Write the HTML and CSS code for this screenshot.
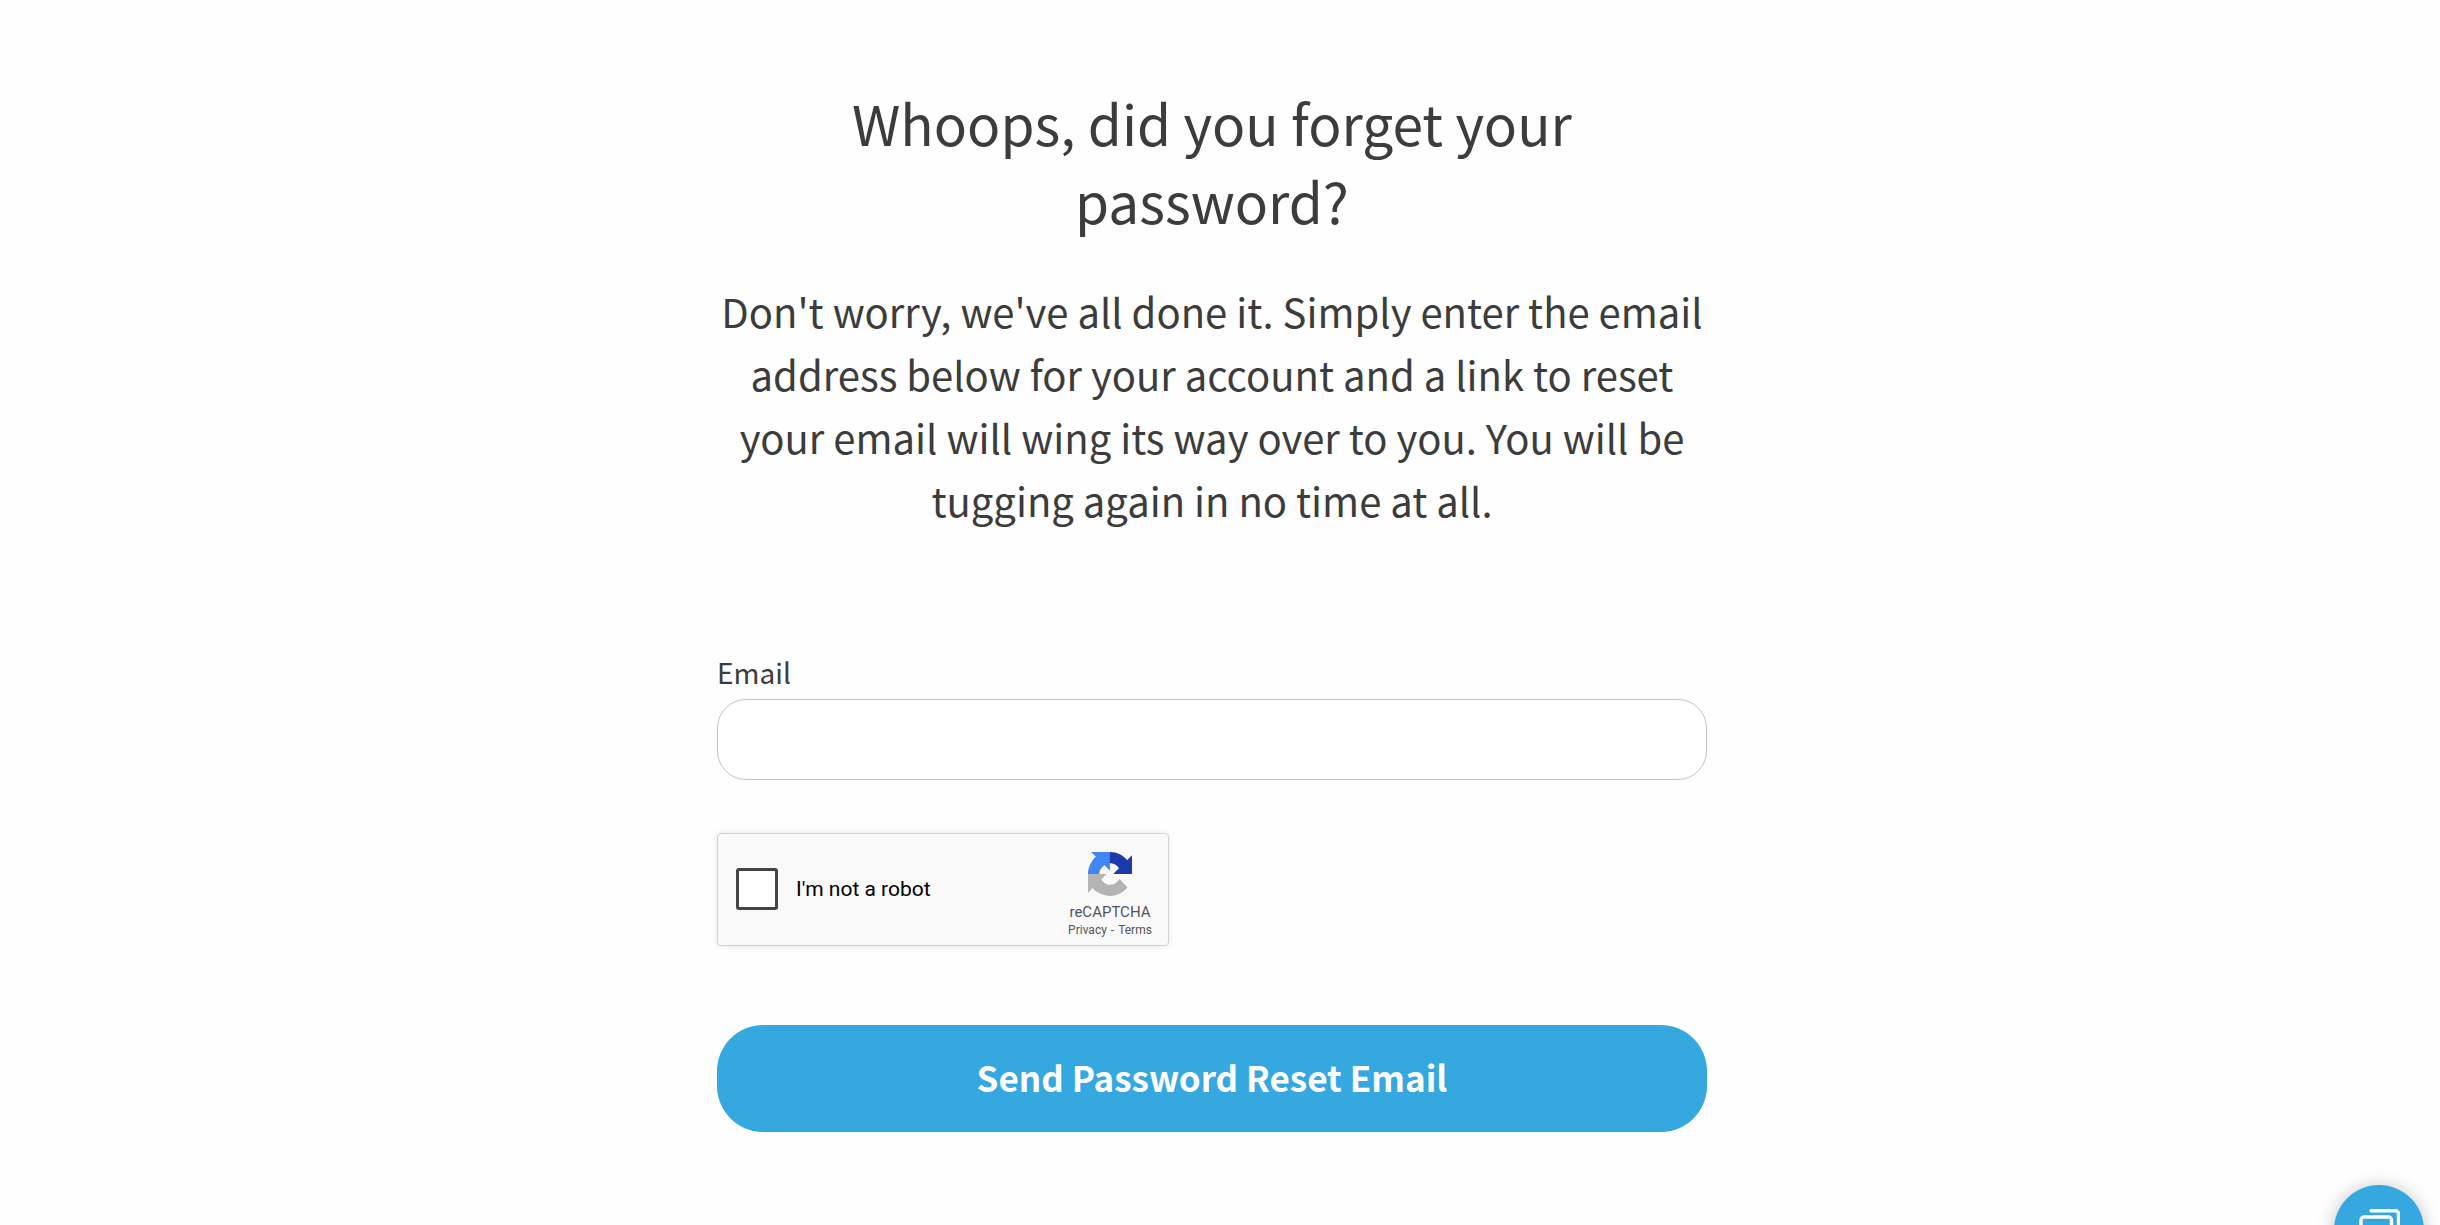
FILE: index.html
```html
<!DOCTYPE html>
<html lang="en">
<head>
<meta charset="utf-8">
<meta name="viewport" content="width=device-width, initial-scale=1">
<title>Forgot password</title>
<link rel="stylesheet" href="styles.css">
</head>
<body>
<main class="reset">
  <h1 class="reset-title">Whoops, did you forget your password?</h1>
  <p class="reset-intro">Don't worry, we've all done it. Simply enter the email address below for your account and a link to reset your email will wing its way over to you. You will be tugging again in no time at all.</p>
  <form class="reset-form">
    <label class="field-label" for="email">Email</label>
    <input class="field-input" type="email" id="email" name="email">
    <div class="captcha">
      <input class="captcha-box" type="checkbox" id="robot">
      <label class="captcha-label" for="robot">I'm not a robot</label>
      <div class="captcha-brand">
        <svg class="captcha-logo" viewBox="0 0 64 64" aria-hidden="true">
          <path fill="#1c3aa9" d="M64 31.955l-.033-1.37V4.687l-7.16 7.16C50.948 4.674 42.033.093 32.05.093c-10.4 0-19.622 4.96-25.458 12.64l11.736 11.86a15.55 15.55 0 0 1 4.754-5.334c2.05-1.6 4.952-2.906 8.968-2.906.485 0 .86.057 1.135.163 4.976.393 9.288 3.14 11.828 7.124l-8.307 8.307L64 31.953"/>
          <path fill="#4285f4" d="M31.862.094l-1.37.033H4.594l7.16 7.16C4.58 13.147 0 22.06 0 32.046c0 10.4 4.96 19.622 12.64 25.458L24.5 45.768a15.55 15.55 0 0 1-5.334-4.754c-1.6-2.05-2.906-4.952-2.906-8.968 0-.485.057-.86.163-1.135.393-4.976 3.14-9.288 7.124-11.828l8.307 8.307L31.86.095"/>
          <path fill="#b4b4b4" d="M.001 32.045l.033 1.37v25.898l7.16-7.16c5.86 7.173 14.774 11.754 24.76 11.754 10.4 0 19.622-4.96 25.458-12.64l-11.736-11.86a15.55 15.55 0 0 1-4.754 5.334c-2.05 1.6-4.952 2.906-8.968 2.906-.485 0-.86-.057-1.135-.163-4.976-.393-9.288-3.14-11.828-7.124l8.307-8.307c-10.522.04-22.4.066-27.295-.005"/>
        </svg>
        <span class="captcha-name">reCAPTCHA</span>
        <span class="captcha-links"><a href="#privacy">Privacy</a><span>-</span><a href="#terms">Terms</a></span>
      </div>
    </div>
    <button class="reset-submit" type="submit">Send Password Reset Email</button>
  </form>
</main>
<button class="chat" type="button" aria-label="Open chat">
  <svg class="chat-icon" viewBox="0 0 42 42" fill="none" stroke="#fff" stroke-width="3.4" stroke-linecap="round" stroke-linejoin="round" aria-hidden="true">
    <path d="M13 3.8h24.5a3 3 0 0 1 3 3v22"/>
    <path d="M6 10h24.5a3 3 0 0 1 3 3v17a3 3 0 0 1-3 3H14l-7 6v-6H6a3 3 0 0 1-3-3V13a3 3 0 0 1 3-3z"/>
  </svg>
</button>
</body>
</html>
```
FILE: styles.css
```css
* { box-sizing: border-box; }

body {
  margin: 0;
  padding: 0 16px 0 0;
  background: #fefefe;
  color: #3c3c3c;
  font-family: "Noto Sans CJK SC", "Noto Sans", sans-serif;
}

.reset {
  width: 100%;
  max-width: 990px;
  margin: 0 auto;
  padding: 83px 0 90px;
}

.reset-title {
  margin: 0 0 41px;
  font-size: 55px;
  font-weight: 400;
  line-height: 78px;
  text-align: center;
}

.reset-intro {
  margin: 0 0 119px;
  font-size: 40px;
  line-height: 63px;
  text-align: center;
}

.reset-form {
  display: flex;
  flex-direction: column;
}

.field-label {
  margin-bottom: 6px;
  font-size: 28px;
  line-height: 42px;
}

.field-input {
  width: 100%;
  height: 81px;
  margin-bottom: 53px;
  padding: 0 24px;
  border: 1px solid #c4c4c4;
  border-radius: 29px;
  background: #fff;
  font: inherit;
  font-size: 28px;
}

.captcha {
  display: flex;
  align-items: center;
  width: 452px;
  max-width: 100%;
  height: 113px;
  margin-bottom: 79px;
  padding: 0 13px 2px 18px;
  border: 1px solid #d3d3d3;
  border-radius: 4px;
  background: #f9f9f9;
  box-shadow: 0 0 6px rgba(0, 0, 0, 0.1);
  color: #000;
  font-family: Roboto, sans-serif;
}

.captcha-box {
  appearance: none;
  width: 42px;
  height: 42px;
  margin: 0 18px 0 0;
  border: 3px solid #444;
  border-radius: 3px;
  background: #fff;
}

.captcha-label {
  flex: 1;
  font-size: 21px;
  line-height: 24px;
}

.captcha-brand {
  display: flex;
  flex-direction: column;
  align-items: center;
  width: 90px;
  padding-top: 12px;
  color: #555;
}

.captcha-logo {
  width: 44px;
  height: 44px;
  margin-bottom: 7px;
}

.captcha-name {
  font-size: 15px;
  line-height: 19px;
}

.captcha-links {
  display: flex;
  gap: 4px;
  font-size: 12px;
  line-height: 16px;
}

.captcha-links a {
  color: inherit;
  text-decoration: none;
}

.reset-submit {
  width: 100%;
  height: 107px;
  padding: 0 0 4px;
  border: 0;
  border-radius: 46px;
  background: #36a8e0;
  color: #fff;
  font: inherit;
  font-size: 35px;
  font-weight: 700;
  line-height: 54px;
}

.chat {
  position: fixed;
  right: 16px;
  bottom: -50px;
  display: flex;
  justify-content: center;
  width: 90px;
  height: 90px;
  padding: 22px 0 0;
  border: 0;
  border-radius: 50%;
  background: #36a8e0;
  box-shadow: 0 2px 18px rgba(0, 0, 0, 0.25);
}

.chat-icon {
  width: 42px;
  height: 42px;
}
```
